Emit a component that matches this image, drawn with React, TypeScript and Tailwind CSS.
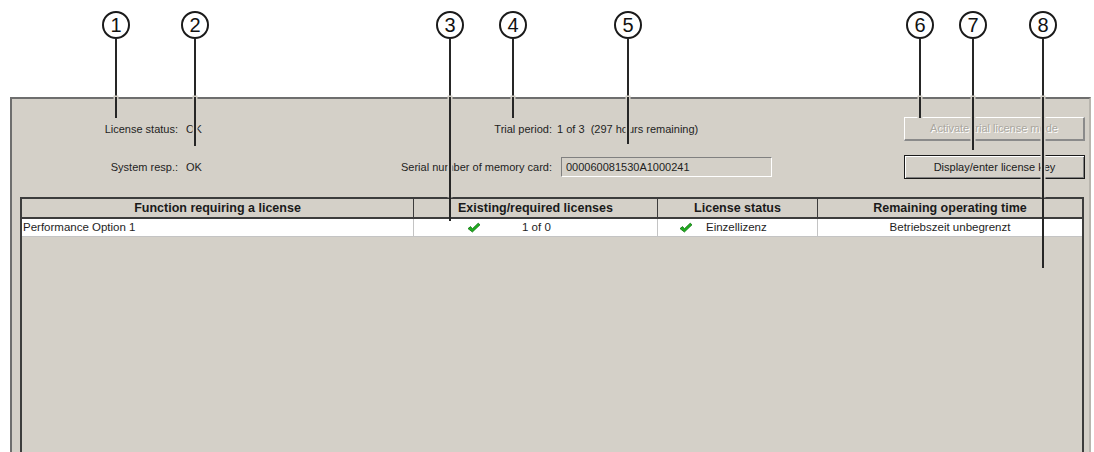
import React from "react";

const CALLOUTS = [
  { n: 1, x: 116, end: 118 },
  { n: 2, x: 195, end: 146 },
  { n: 3, x: 450, end: 221 },
  { n: 4, x: 513, end: 118 },
  { n: 5, x: 628, end: 144 },
  { n: 6, x: 920, end: 118 },
  { n: 7, x: 973, end: 150 },
  { n: 8, x: 1043, end: 268 },
];

function Check() {
  return (
    <svg width="14" height="11" viewBox="0 0 14 11" className="shrink-0">
      <path d="M1 6.6 L3.6 4.6 L5.4 6.8 L11.2 1.2 L13 2.8 L5.4 10 Z" fill="#1fae1f" stroke="#0d6e0d" strokeWidth="0.8" strokeLinejoin="round" />
    </svg>
  );
}

function Callout({ n, x, end }: { n: number; x: number; end: number }) {
  const haloEnd = Math.min(end, 196);
  return (
    <>
      <div
        className="absolute w-[2px] bg-[#262626]"
        style={{ left: x - 1, top: 39, height: 97 - 39 }}
      />
      <div
        className="absolute w-[2px] bg-[#262626] shadow-[0_0_0_1.5px_#d4d0c8]"
        style={{ left: x - 1, top: 97, height: haloEnd - 97 }}
      />
      {end > 196 && (
        <div
          className="absolute w-[2px] bg-[#262626]"
          style={{ left: x - 1, top: 196, height: end - 196 }}
        />
      )}
      <div
        className="absolute w-[28px] h-[28px] rounded-full border-2 border-[#1a1a1a] bg-white flex items-center justify-center text-[20px] leading-none text-[#111]"
        style={{ left: x - 14, top: 11 }}
      >
        {n}
      </div>
    </>
  );
}

export default function App() {
  const headCls = "h-full flex items-center justify-center font-bold text-[12.5px] text-[#1a1a1a] border-r border-[#3c3c3c]";
  const cellCls = "h-full flex items-center border-r border-[#c4c4c4]";

  return (
    <div className="relative w-[1094px] h-[452px] bg-white overflow-hidden font-['Liberation_Sans',Arial,sans-serif] text-[11px] text-[#1e1e1e]">
      <div className="pt-[97px] pl-[10px]">
        <div className="w-[1081px] h-[360px] bg-[#d4d0c8] border-l-2 border-t-2 border-r-2 border-l-[#6e6e6e] border-t-[#6e6e6e] border-r-[#b8b5ae]">
          {/* status / trial / buttons */}
          <div className="pt-[18px] grid grid-cols-[166px_200px_174px_352px_181px] grid-rows-[24px_24px] gap-y-[14px] items-center">
            <div className="text-right">License status:</div>
            <div className="pl-[8px]">OK</div>
            <div className="text-right">Trial period:</div>
            <div className="pl-[5px]">1 of 3&nbsp; (297 hours remaining)</div>
            <button className="h-[24px] w-full bg-[#d4d0c8] border-t border-l border-t-white border-l-white border-r-2 border-b-2 border-r-[#8a8a8a] border-b-[#8a8a8a] text-[#aaa79f] [text-shadow:1px_1px_0_#ffffff]">
              Activate trial license mode
            </button>

            <div className="text-right">System resp.:</div>
            <div className="pl-[8px]">OK</div>
            <div className="text-right">Serial number of memory card:</div>
            <div className="pl-[9px]">
              <div className="w-[211px] h-[20px] flex items-center pl-[4px] border-t border-l border-t-[#808080] border-l-[#808080] border-r border-b border-r-white border-b-white">
                000060081530A1000241
              </div>
            </div>
            <button className="h-[24px] w-full bg-[#d4d0c8] border border-[#1a1a1a] text-[#1a1a1a] shadow-[inset_1px_1px_0_#ffffff,inset_-1px_-1px_0_#808080]">
              Display/enter license key
            </button>
          </div>

          {/* license table */}
          <div className="mt-[18px] ml-[8px] w-[1064px] h-[260px] border-t-2 border-l-2 border-r-2 border-[#3c3c3c]">
            <div className="h-[20px] grid grid-cols-[392px_244px_160px_264px] border-b-2 border-[#3c3c3c]">
              <div className={headCls}>Function requiring a license</div>
              <div className={headCls}>Existing/required licenses</div>
              <div className={headCls}>License status</div>
              <div className="h-full flex items-center justify-center font-bold text-[12.5px] text-[#1a1a1a]">Remaining operating time</div>
            </div>
            <div className="h-[18px] grid grid-cols-[392px_244px_160px_264px] bg-white border-b border-[#c4c4c4] text-[11.5px]">
              <div className={`${cellCls} pl-[1px]`}>Performance Option 1</div>
              <div className={`${cellCls} pl-[53px]`}>
                <Check />
                <span className="ml-[41px]">1 of 0</span>
              </div>
              <div className={`${cellCls} pl-[21px]`}>
                <Check />
                <span className="ml-[13px]">Einzellizenz</span>
              </div>
              <div className="h-full flex items-center justify-center">Betriebszeit unbegrenzt</div>
            </div>
          </div>
        </div>
      </div>

      {CALLOUTS.map((c) => (
        <Callout key={c.n} {...c} />
      ))}
    </div>
  );
}
